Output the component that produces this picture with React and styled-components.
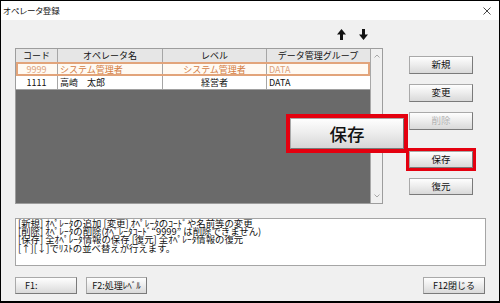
import React from "react";
import styled, { createGlobalStyle } from "styled-components";

const FONT = `"Noto Sans CJK JP", "Noto Sans", sans-serif`;
const RED = "#e4000f";
const ORANGE_TEXT = "#d27c44";

const Global = createGlobalStyle`
  html, body { margin: 0; padding: 0; background: #ffffff; }
  * { box-sizing: border-box; }
`;

const Window = styled.div`
  position: relative;
  width: 500px;
  height: 303px;
  border: 1px solid #000;
  border-bottom-width: 2px;
  background: #f0f0f0;
  font-family: ${FONT};
  display: flex;
  flex-direction: column;
  overflow: hidden;
`;

const TitleBar = styled.div`
  height: 19px;
  background: #fff;
  display: flex;
  align-items: center;
  justify-content: space-between;
  padding: 0 8px 0 2px;
`;

const Title = styled.span`
  font-size: 8.5px;
  color: #111;
  font-feature-settings: "palt";
  line-height: 1;
`;

const Body = styled.div`
  flex: 1;
  display: flex;
  flex-direction: column;
  padding: 0 13px 0 14px;
`;

const ArrowRow = styled.div`
  height: 28px;
  display: flex;
  gap: 13px;
  padding: 9px 0 0 322px;
`;

const MainRow = styled.div`
  display: flex;
  height: 156px;
`;

const TableFrame = styled.div`
  width: 368px;
  height: 156px;
  border: 1px solid #9d9d9d;
  display: flex;
  background: #6a6a6a;
`;

const GridArea = styled.div`
  flex: 1;
  display: flex;
  flex-direction: column;
`;

const Row = styled.div`
  position: relative;
  display: grid;
  grid-template-columns: 42px 105px 104px 1fr;
  height: ${(p) => p.$h}px;
  background: ${(p) => (p.$header ? "#e6e6e6" : p.$selected ? "#fffaf3" : "#fff")};
  color: ${(p) => (p.$selected ? ORANGE_TEXT : "#111")};
  border-bottom: 1px solid #a0a0a0;
  font-size: 9px;
  &::after {
    content: "";
    display: ${(p) => (p.$selected ? "block" : "none")};
    position: absolute;
    left: 0;
    right: 0;
    top: -1px;
    bottom: -1px;
    border: 2px solid #e2a47a;
    pointer-events: none;
  }
`;

const Cell = styled.div`
  border-right: 1px solid ${(p) => (p.$last ? "transparent" : "#a6a6a6")};
  display: flex;
  align-items: center;
  justify-content: ${(p) => (p.$center ? "center" : "flex-start")};
  padding-left: ${(p) => (p.$center ? 0 : 2)}px;
  line-height: 1;
  white-space: nowrap;
  color: ${(p) => p.$color || "inherit"};
`;

const ScrollTrack = styled.div`
  width: 12px;
  background: #f0f0f0;
  border-left: 1px solid #a8a8a8;
  display: flex;
  flex-direction: column;
  justify-content: space-between;
  align-items: center;
  padding: 5px 0 5px;
`;

const ButtonColumn = styled.div`
  display: flex;
  flex-direction: column;
  gap: 10px;
  margin-left: 26px;
  padding-top: 8px;
  width: 64px;
`;

const Button = styled.div`
  width: ${(p) => p.$w || 64}px;
  height: ${(p) => p.$h || 18}px;
  margin-top: ${(p) => p.$mt || 0}px;
  border: 1px solid #a9a9a9;
  border-right-color: #7a7a7a;
  border-bottom-color: #7a7a7a;
  background: linear-gradient(#fefefe 0%, #eeeeee 45%, #d9d9d9 100%);
  display: flex;
  align-items: center;
  justify-content: ${(p) => (p.$left ? "flex-start" : "center")};
  padding-left: ${(p) => (p.$left ? 9 : 0)}px;
  font-size: ${(p) => p.$fs || 9.5}px;
  color: ${(p) => (p.$disabled ? "#b5b5b5" : "#111")};
  line-height: 1;
  white-space: nowrap;
  outline: ${(p) => (p.$marked ? `3px solid ${RED}` : "none")};
`;

const InfoBox = styled.div`
  margin-top: 14px;
  height: 48px;
  width: 471px;
  background: #fff;
  border: 1px solid #a5a5a5;
  padding: 0 2px;
  font-size: 9.4px;
  line-height: 8.2px;
  color: #111;
  white-space: pre;
`;

const BottomRow = styled.div`
  margin-top: 11px;
  display: flex;
  gap: 9px;
  width: 470px;
`;

const Spacer = styled.div`
  flex: 1;
`;

const Callout = styled.div`
  position: absolute;
  left: 285px;
  top: 113px;
  width: 122px;
  height: 39px;
  border: 4px solid ${RED};
  display: flex;
`;

const BigButton = styled.div`
  flex: 1;
  border: 1px solid #a9a9a9;
  border-right-color: #7a7a7a;
  border-bottom-color: #7a7a7a;
  background: linear-gradient(#fefefe 0%, #eeeeee 45%, #d6d6d6 100%);
  display: flex;
  align-items: center;
  justify-content: center;
  font-size: 17.5px;
  font-weight: 500;
  color: #111;
  line-height: 1;
`;

const UpArrow = () => (
  <svg width="9" height="11" viewBox="0 0 9 11">
    <polygon points="4.5,0 9,5.5 6,5.5 6,11 3,11 3,5.5 0,5.5" fill="#111" />
  </svg>
);
const DownArrow = () => (
  <svg width="9" height="11" viewBox="0 0 9 11">
    <polygon points="4.5,11 9,5.5 6,5.5 6,0 3,0 3,5.5 0,5.5" fill="#111" />
  </svg>
);
const Chevron = ({ up }) => (
  <svg width="6" height="4" viewBox="0 0 6 4">
    <polyline
      points={up ? "0.5,3.5 3,1 5.5,3.5" : "0.5,0.5 3,3 5.5,0.5"}
      fill="none"
      stroke="#a8a8a8"
      strokeWidth="1"
    />
  </svg>
);
const CloseIcon = () => (
  <svg width="8" height="8" viewBox="0 0 8 8">
    <path d="M0.5 0.5 L7.5 7.5 M7.5 0.5 L0.5 7.5" stroke="#333" strokeWidth="0.9" />
  </svg>
);

const rows = [
  { code: "9999", name: "システム管理者", level: "システム管理者", group: "DATA", selected: true },
  { code: "1111", name: "高崎　太郎", level: "経営者", group: "DATA" },
];

const info = [
  "[新規] ｵﾍﾟﾚｰﾀの追加 [変更] ｵﾍﾟﾚｰﾀのｺｰﾄﾞや名前等の変更",
  "[削除] ｵﾍﾟﾚｰﾀの削除(ｵﾍﾟﾚｰﾀｺｰﾄﾞ“9999” は削除できません)",
  "[保存] 全ｵﾍﾟﾚｰﾀ情報の保存 [復元] 全ｵﾍﾟﾚｰﾀ情報の復元",
  "[↑][↓]でﾘｽﾄの並べ替えが行えます。",
].join("\n");

export default function App() {
  return (
    <>
      <Global />
      <Window>
        <TitleBar>
          <Title>オペレータ登録</Title>
          <CloseIcon />
        </TitleBar>
        <Body>
          <ArrowRow>
            <UpArrow />
            <DownArrow />
          </ArrowRow>
          <MainRow>
            <TableFrame>
              <GridArea>
                <Row $header $h={14}>
                  <Cell $center>コード</Cell>
                  <Cell $center>オペレータ名</Cell>
                  <Cell $center>レベル</Cell>
                  <Cell $center $last>データ管理グループ</Cell>
                </Row>
                {rows.map((r) => (
                  <Row key={r.code} $selected={r.selected} $h={r.selected ? 13 : 14}>
                    <Cell $center $color={r.selected ? "#dca27c" : undefined}>{r.code}</Cell>
                    <Cell>{r.name}</Cell>
                    <Cell $center>{r.level}</Cell>
                    <Cell $last $color={r.selected ? "#dca27c" : undefined}>{r.group}</Cell>
                  </Row>
                ))}
              </GridArea>
              <ScrollTrack>
                <Chevron up />
                <Chevron />
              </ScrollTrack>
            </TableFrame>
            <ButtonColumn>
              <Button>新規</Button>
              <Button>変更</Button>
              <Button $disabled>削除</Button>
              <Button $mt={11} $h={17} $marked>保存</Button>
              <Button $h={17}>復元</Button>
            </ButtonColumn>
          </MainRow>
          <InfoBox>{info}</InfoBox>
          <BottomRow>
            <Button $w={62} $h={17} $left $fs={9}>F1:</Button>
            <Button $w={61} $h={17} $fs={9}>F2:処理ﾚﾍﾞﾙ</Button>
            <Spacer />
            <Button $w={62} $h={17} $fs={9}>F12閉じる</Button>
          </BottomRow>
        </Body>
        <Callout>
          <BigButton>保存</BigButton>
        </Callout>
      </Window>
    </>
  );
}
